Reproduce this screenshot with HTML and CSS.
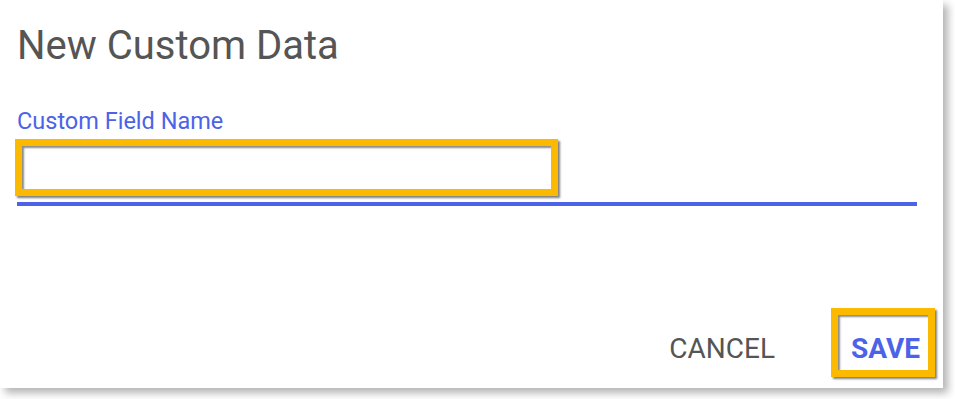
FILE: index.html
```html
<!DOCTYPE html>
<html lang="en">
<head>
<meta charset="utf-8">
<title>New Custom Data</title>
<link rel="stylesheet" href="styles.css">
</head>
<body>
  <div class="dialog">
    <h1 class="title">New Custom Data</h1>
    <label class="field-label" for="cf-name">Custom Field Name</label>
    <div class="field">
      <input id="cf-name" class="field-input" type="text">
      <span class="highlight highlight-input"></span>
    </div>
    <div class="actions">
      <button class="btn btn-cancel" type="button">CANCEL</button>
      <button class="btn btn-save" type="button">SAVE<span class="highlight highlight-save"></span></button>
    </div>
  </div>
</body>
</html>
```

FILE: styles.css
```css
html, body {
  margin: 0;
  padding: 0;
  background: #ffffff;
}

body {
  font-family: Roboto, "Liberation Sans", Arial, sans-serif;
  min-height: 399px;
}

.dialog {
  box-sizing: border-box;
  width: 943px;
  height: 388px;
  background: #ffffff;
  box-shadow: 5px 5px 8px rgba(0, 0, 0, 0.3);
  display: flex;
  flex-direction: column;
  padding: 22px 23px 23px 17px;
}

.title {
  margin: 0;
  font-size: 40px;
  line-height: 48px;
  font-weight: 400;
  color: #555555;
}

.field-label {
  display: block;
  margin-top: 37px;
  font-size: 23.5px;
  line-height: 28px;
  color: #4c63e8;
}

.field {
  position: relative;
  height: 67px;
  margin-right: 3px;
  border-bottom: 4px solid #4c63e8;
}

.field-input {
  box-sizing: border-box;
  width: 100%;
  height: 100%;
  border: 0;
  outline: none;
  background: transparent;
  font: inherit;
  font-size: 22px;
  padding: 0;
}

.highlight {
  position: absolute;
  box-sizing: border-box;
  border: 7px solid #fbb900;
  box-shadow: 2px 2px 2px rgba(0, 0, 0, 0.5), inset 2px 2px 2px rgba(0, 0, 0, 0.45);
  pointer-events: none;
}

.highlight-input {
  left: -2px;
  top: 4px;
  width: 543px;
  height: 57px;
}

.actions {
  margin-top: auto;
  display: flex;
  justify-content: flex-end;
  gap: 76px;
}

.btn {
  position: relative;
  border: 0;
  background: transparent;
  padding: 0;
  margin: 0;
  font-family: Roboto, "Liberation Sans", Arial, sans-serif;
  font-size: 28px;
  line-height: 32px;
  cursor: pointer;
}

.btn-cancel {
  color: #555555;
  font-weight: 400;
}

.btn-save {
  color: #4c63e8;
  font-weight: 700;
}

.highlight-save {
  left: -20px;
  top: -25px;
  width: 104px;
  height: 69px;
}
```
